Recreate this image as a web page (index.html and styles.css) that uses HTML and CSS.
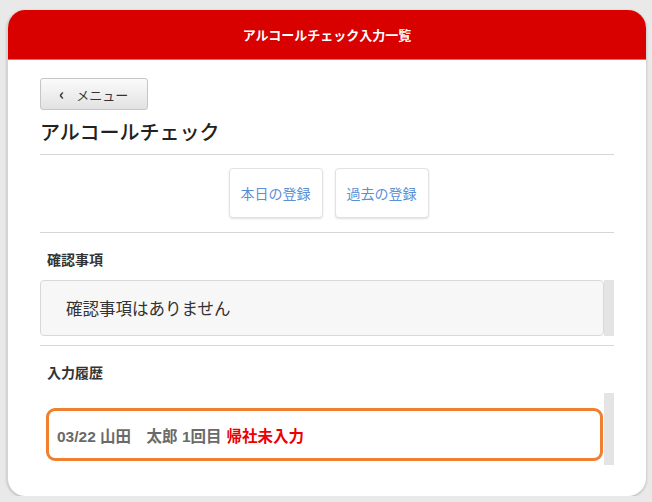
FILE: index.html
```html
<!DOCTYPE html>
<html lang="ja">
<head>
<meta charset="utf-8">
<title>アルコールチェック入力一覧</title>
<link rel="stylesheet" href="styles.css">
</head>
<body>
<div class="card">
  <header class="card-header">アルコールチェック入力一覧</header>
  <main class="card-body">
    <button class="menu-btn"><span class="chev">‹</span><span>メニュー</span></button>
    <h1 class="page-title">アルコールチェック</h1>
    <div class="reg-row">
      <button class="reg-btn">本日の登録</button>
      <button class="reg-btn">過去の登録</button>
    </div>
    <section class="section bordered">
      <h2 class="sec-title">確認事項</h2>
      <div class="scroll-row">
        <div class="notice">確認事項はありません</div>
        <div class="scrollbar"></div>
      </div>
    </section>
    <section class="section">
      <h2 class="sec-title">入力履歴</h2>
      <div class="scroll-row history">
        <div class="history-list">
          <div class="history-item"><span class="meta">03/22 山田　太郎 1回目</span> <span class="status">帰社未入力</span></div>
        </div>
        <div class="scrollbar"></div>
      </div>
    </section>
  </main>
</div>
</body>
</html>
```
FILE: styles.css
```css
html, body {
  margin: 0;
  padding: 0;
}
body {
  background: #e9e9e9;
  font-family: "Noto Sans CJK JP", "Liberation Sans", sans-serif;
  color: #333;
  padding: 10px 6px 0 7px;
}
.card {
  width: 639px;
  height: 486px;
  background: #fff;
  border-radius: 18px;
  box-shadow: 0 1px 3px rgba(0,0,0,0.25);
  border-left: 1px solid #d4d4d4;
  box-sizing: border-box;
  overflow: hidden;
  display: flex;
  flex-direction: column;
}
.card-header {
  height: 50px;
  background: #d90000;
  color: #fff;
  font-weight: bold;
  font-size: 13px;
  display: flex;
  align-items: center;
  justify-content: center;
  border-bottom: 1px solid #e86a6a;
  box-sizing: border-box;
}
.card-body {
  padding: 18px 32px 0 32px;
  display: flex;
  flex-direction: column;
}
.menu-btn {
  width: 108px;
  height: 32px;
  border: 1px solid #c6c6c6;
  border-radius: 3px;
  background: linear-gradient(#fbfbfb, #e2e2e2);
  font-family: inherit;
  font-size: 13px;
  color: #333;
  display: flex;
  align-items: center;
  padding: 0 0 0 18px;
  gap: 12px;
  align-self: flex-start;
}
.chev {
  font-size: 16px;
  font-weight: bold;
  line-height: 1;
  margin-top: -3px;
}
.page-title {
  margin: 8px 0 0 0;
  font-size: 20px;
  font-weight: 500;
  line-height: 28px;
  padding-bottom: 8px;
  border-bottom: 1px solid #d6d6d6;
  color: #222;
}
.reg-row {
  display: flex;
  justify-content: center;
  gap: 12px;
  padding: 13px 0 14px 3px;
  border-bottom: 1px solid #d6d6d6;
}
.reg-btn {
  width: 94px;
  height: 50px;
  background: #fff;
  border: 1px solid #e2e2e2;
  border-radius: 4px;
  box-shadow: 0 1px 2px rgba(0,0,0,0.12);
  color: #5b8fd6;
  font-family: inherit;
  font-size: 14px;
  padding: 0;
}
.section {
  display: flex;
  flex-direction: column;
}
.section.bordered {
  padding-bottom: 9px;
  border-bottom: 1px solid #d6d6d6;
}
.sec-title {
  margin: 0;
  padding: 16px 0 0 7px;
  font-size: 14px;
  line-height: 20px;
  font-weight: bold;
  color: #333;
}
.scroll-row {
  display: flex;
  margin-top: 11px;
}
.notice {
  flex: 1;
  height: 56px;
  box-sizing: border-box;
  background: #f7f7f7;
  border: 1px solid #d8d8d8;
  border-radius: 4px;
  font-size: 16.5px;
  color: #333;
  display: flex;
  align-items: center;
  padding-left: 25px;
}
.scrollbar {
  width: 10px;
  background: #e4e4e4;
}
.scroll-row.history {
  height: 72px;
}
.history-list {
  flex: 1;
  padding: 15px 1px 0 6px;
}
.history-item {
  height: 53px;
  box-sizing: border-box;
  border: 3px solid #f07f30;
  border-radius: 9px;
  display: flex;
  align-items: center;
  padding-left: 8px;
  font-size: 15.5px;
  font-weight: bold;
  gap: 5px;
}
.meta {
  color: #6a6a6a;
  font-family: "Liberation Sans", "Noto Sans CJK JP", sans-serif;
}
.status {
  color: #ee0000;
}
```
